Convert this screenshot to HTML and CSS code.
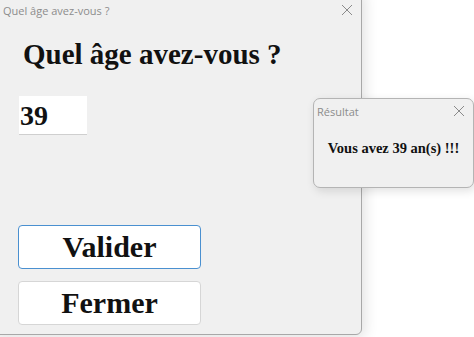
FILE: index.html
```html
<!DOCTYPE html>
<html lang="fr">
<head>
<meta charset="utf-8">
<link rel="stylesheet" href="styles.css">
</head>
<body>
<div class="desktop">
  <div class="window main">
    <div class="titlebar">
      <span class="title">Quel âge avez-vous ?</span>
      <svg class="close" width="12" height="12" viewBox="0 0 12 12"><path d="M1 1L11 11M11 1L1 11" stroke="#8a8a8a" stroke-width="1"/></svg>
    </div>
    <div class="content">
      <h1 class="question">Quel âge avez-vous ?</h1>
      <div class="field">39</div>
      <div class="buttons">
        <button class="btn primary">Valider</button>
        <button class="btn">Fermer</button>
      </div>
    </div>
  </div>
  <div class="window popup">
    <div class="titlebar small">
      <span class="title">Résultat</span>
      <svg class="close" width="12" height="12" viewBox="0 0 12 12"><path d="M1 1L11 11M11 1L1 11" stroke="#8a8a8a" stroke-width="1"/></svg>
    </div>
    <p class="message">Vous avez 39 an(s) !!!</p>
  </div>
</div>
</body>
</html>
```
FILE: styles.css
```css
html, body {
  margin: 0;
  padding: 0;
  background: #ffffff;
  width: 474px;
  height: 337px;
  overflow: hidden;
}
.desktop {
  position: relative;
  width: 474px;
  height: 337px;
}
.window {
  position: absolute;
  background: #f0f0f0;
  box-sizing: border-box;
  font-family: "Open Sans", "Noto Sans", sans-serif;
}
.main {
  left: -10px;
  top: -10px;
  width: 372px;
  height: 345px;
  border: 1px solid #a8a8a8;
  border-radius: 0 0 6px 0;
  box-shadow: 3px 3px 14px rgba(0,0,0,0.12);
  display: flex;
  flex-direction: column;
}
.titlebar {
  height: 30px;
  display: flex;
  align-items: center;
  justify-content: space-between;
  padding: 8px 8px 0 12px;
  box-sizing: border-box;
  flex: none;
}
.title {
  font-size: 11px;
  color: #8c8c8c;
}
.close {
  display: block;
}
.content {
  padding: 0 0 0 27px;
  display: flex;
  flex-direction: column;
  align-items: flex-start;
  font-family: "Liberation Serif", "Times New Roman", serif;
}
.question {
  margin: 16px 0 0 5px;
  font-size: 29px;
  line-height: 34px;
  font-weight: bold;
  color: #111;
}
.field {
  margin-top: 25px;
  margin-left: 1px;
  width: 68px;
  height: 39px;
  background: #fff;
  border-bottom: 1px solid #cfcfcf;
  box-sizing: border-box;
  font-size: 28px;
  font-weight: bold;
  line-height: 39px;
  padding-left: 1px;
  color: #111;
}
.buttons {
  margin-top: 90px;
  display: flex;
  flex-direction: column;
  gap: 12px;
}
.btn {
  width: 183px;
  height: 44px;
  background: #fff;
  border: 1px solid #d6d6d6;
  border-radius: 4px;
  font-family: "Liberation Serif", "Times New Roman", serif;
  font-size: 30px;
  font-weight: bold;
  color: #111;
  padding: 0;
  line-height: 40px;
}
.btn.primary {
  border-color: #4a90d0;
}
.popup {
  left: 313px;
  top: 98px;
  width: 161px;
  height: 90px;
  border: 1px solid #b4b4b4;
  border-radius: 7px;
  box-shadow: 2px 3px 10px rgba(0,0,0,0.12);
}
.titlebar.small {
  height: 22px;
  padding: 2px 8px 0 3px;
}
.message {
  margin: 19px 0 0 0;
  text-align: center;
  font-family: "Liberation Serif", "Times New Roman", serif;
  font-weight: bold;
  font-size: 14.5px;
  color: #111;
}
```
